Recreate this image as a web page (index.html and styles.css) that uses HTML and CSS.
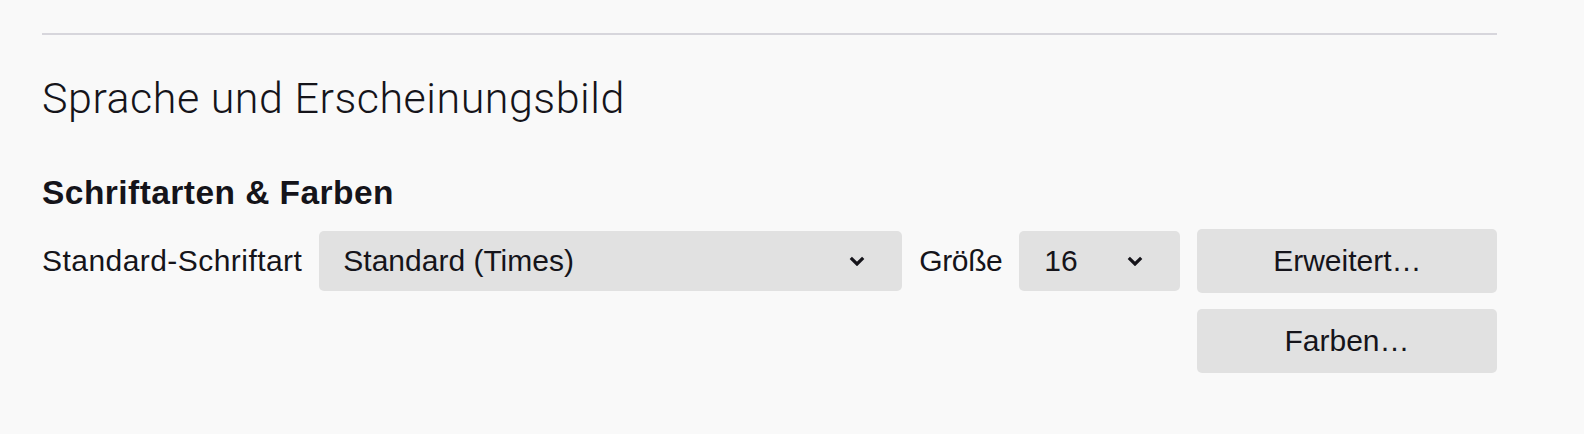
FILE: index.html
```html
<!DOCTYPE html>
<html lang="de">
<head>
<meta charset="utf-8">
<link rel="stylesheet" href="styles.css">
</head>
<body>
<div class="page">
  <hr class="divider">
  <h1 class="title">Sprache und Erscheinungsbild</h1>
  <h2 class="subtitle">Schriftarten &amp; Farben</h2>
  <div class="row">
    <span class="label label-font">Standard-Schriftart</span>
    <div class="select select-font">
      <span class="select-text">Standard (Times)</span>
      <svg class="chevron" width="16" height="10" viewBox="0 0 16 10"><path d="M1.8 1.8 L8 8 L14.2 1.8" fill="none" stroke="#15141a" stroke-width="3.2"/></svg>
    </div>
    <span class="label label-size">Größe</span>
    <div class="select select-size">
      <span class="select-text">16</span>
      <svg class="chevron" width="16" height="10" viewBox="0 0 16 10"><path d="M1.8 1.8 L8 8 L14.2 1.8" fill="none" stroke="#15141a" stroke-width="3.2"/></svg>
    </div>
    <button class="btn btn-first">Erweitert…</button>
  </div>
  <div class="row row-end">
    <button class="btn">Farben…</button>
  </div>
</div>
</body>
</html>
```

FILE: styles.css
```css
html, body {
  margin: 0;
  padding: 0;
  background: #f9f9f9;
}
body {
  font-family: "Liberation Sans", Arial, sans-serif;
  color: #15141a;
}
.page {
  width: 1455px;
  margin-left: 42px;
  padding-top: 33px;
}
.divider {
  border: 0;
  height: 2px;
  background: #d7d6dc;
  margin: 0;
}
.title {
  font-family: Roboto, "Liberation Sans", sans-serif;
  font-size: 43px;
  font-weight: 300;
  line-height: 50px;
  margin: 38px 0 0 0;
  letter-spacing: 0.52px;
}
.subtitle {
  font-size: 33.5px;
  font-weight: bold;
  line-height: 40px;
  letter-spacing: 0.45px;
  margin: 50px 0 0 0;
}
.row {
  display: flex;
  align-items: center;
  gap: 17px;
  margin-top: 16px;
}
.row-end {
  justify-content: flex-end;
}
.label {
  font-size: 30px;
  white-space: nowrap;
}
.label-font {
  letter-spacing: 0.45px;
}
.label-size {
  letter-spacing: -0.4px;
}
.select {
  height: 60px;
  background: #e1e1e1;
  border-radius: 5px;
  display: flex;
  align-items: center;
  justify-content: space-between;
  box-sizing: border-box;
  font-size: 30px;
  flex-shrink: 0;
}
.select-font {
  width: 583px;
  padding: 0 37px 0 24px;
}
.select-size {
  width: 161px;
  padding: 0 37px 0 25px;
}
.chevron {
  display: block;
}
.btn {
  width: 300px;
  height: 64px;
  border: 0;
  border-radius: 5px;
  background: #e1e1e1;
  font-family: "Liberation Sans", Arial, sans-serif;
  font-size: 30px;
  color: #15141a;
  padding: 0;
  flex-shrink: 0;
}
.btn-first {
  margin-left: auto;
}
```
